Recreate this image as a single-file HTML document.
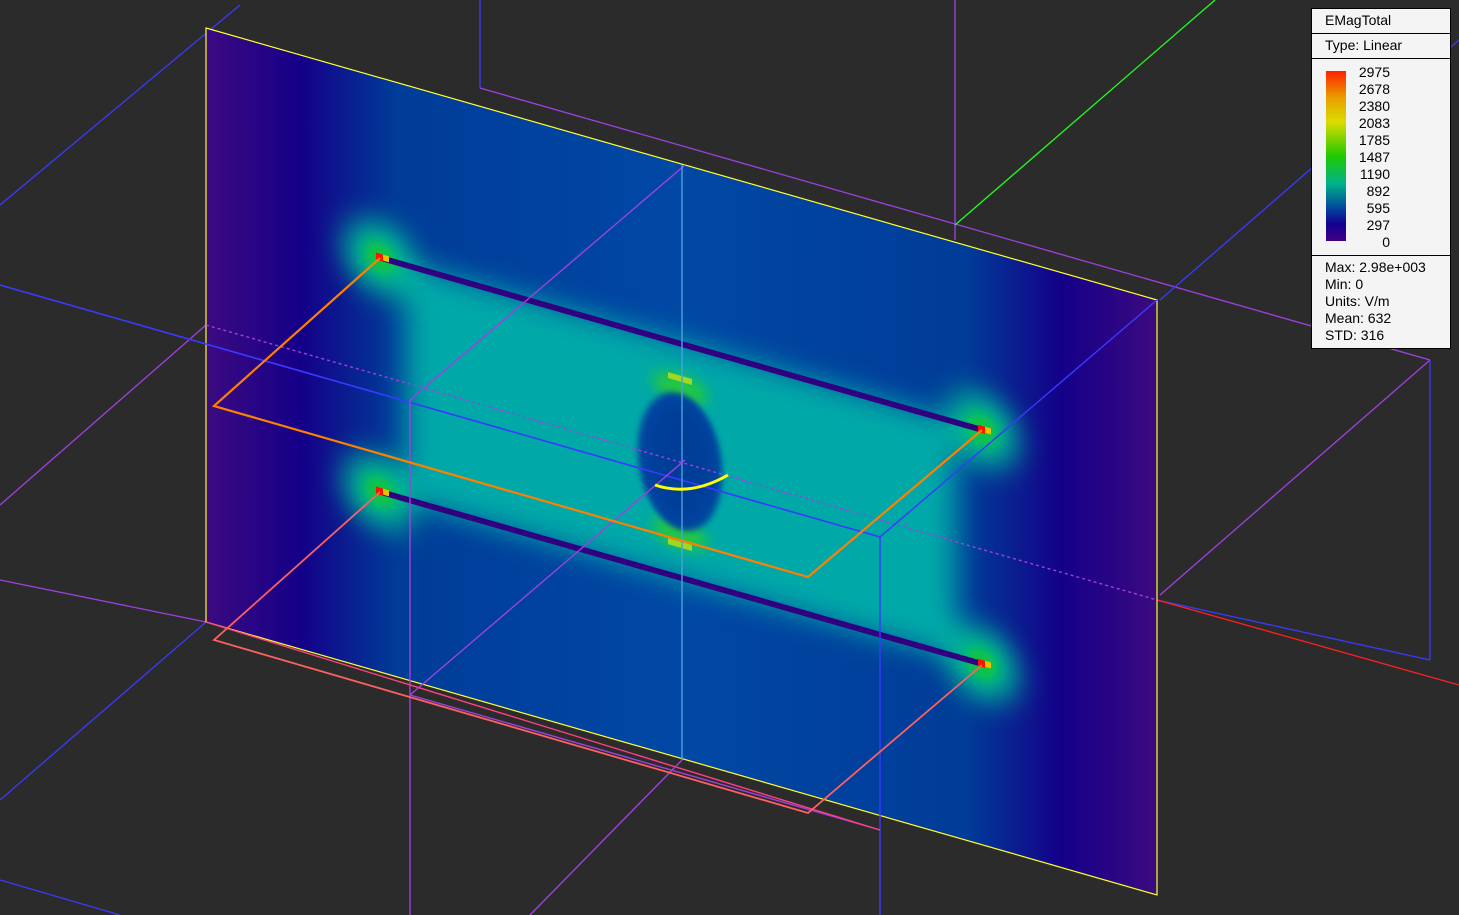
<!DOCTYPE html>
<html><head><meta charset="utf-8"><style>
html,body{margin:0;padding:0;background:#2b2b2b;overflow:hidden}
svg{display:block}
.lg{position:absolute;left:1311px;top:8px;width:138px;height:339px;background:#f4f4f4;border:1px solid #000;font-family:"Liberation Sans",sans-serif;font-size:14px;color:#000}
.lg .h{height:24px;border-bottom:1px solid #000;padding-left:13px;line-height:22px}
.bar{position:absolute;left:14px;top:62px;width:20px;height:170px;background:linear-gradient(#ff2000,#e8a000 16%,#dcdc00 30%,#20c800 50%,#00b488 66%,#004c9c 80%,#140090 90%,#400080)}
.nums{position:absolute;left:38px;top:55px;width:40px;text-align:right;line-height:17px}
.st{position:absolute;left:0;top:246px;width:138px;border-top:1px solid #000;padding:3px 0 0 13px;line-height:17px;box-sizing:border-box}
</style></head><body>
<svg width="1459" height="915" viewBox="0 0 1459 915">
<defs>
<linearGradient id="base" x1="0" y1="0" x2="1" y2="0">
<stop offset="0" stop-color="#3c0a80"/><stop offset="0.1" stop-color="#140088"/><stop offset="0.2" stop-color="#003c98"/><stop offset="0.5" stop-color="#0048a4"/><stop offset="0.8" stop-color="#003c98"/><stop offset="0.9" stop-color="#140088"/><stop offset="1" stop-color="#3c0a80"/>
</linearGradient>
<filter id="b1" x="-50%" y="-50%" width="200%" height="200%"><feGaussianBlur stdDeviation="14"/></filter>
<filter id="b2" x="-50%" y="-50%" width="200%" height="200%"><feGaussianBlur stdDeviation="7"/></filter>
<filter id="b3" x="-50%" y="-50%" width="200%" height="200%"><feGaussianBlur stdDeviation="3"/></filter>
</defs>
<g fill="none" stroke-width="1.3">
<line x1="0" y1="205" x2="240" y2="5" stroke="#3a3aff"/>
<line x1="480" y1="0" x2="480" y2="88" stroke="#3a3aff"/>
<line x1="955" y1="0" x2="955" y2="240" stroke="#a040e0"/>
<line x1="480" y1="88" x2="1430" y2="360" stroke="#a040e0"/>
<line x1="955" y1="225" x2="1215" y2="0" stroke="#20ff20"/>
<line x1="1160" y1="300" x2="1459" y2="40" stroke="#3a3aff"/>
<line x1="1160" y1="595" x2="1430" y2="360" stroke="#a040e0"/>
<line x1="1430" y1="360" x2="1430" y2="660" stroke="#3a3aff"/>
<line x1="0" y1="505" x2="206" y2="325" stroke="#a040e0"/>
<line x1="0" y1="580" x2="206" y2="622" stroke="#a040e0"/>
<line x1="0" y1="800" x2="206" y2="622" stroke="#3a3aff"/>
<line x1="0" y1="880" x2="120" y2="915" stroke="#3a3aff"/>
<line x1="1157" y1="600" x2="1430" y2="660" stroke="#3a3aff"/>
<line x1="1157" y1="600" x2="1459" y2="685" stroke="#ff2020"/>
</g>
<g transform="matrix(1,0.286,0,1,206,28)">
<rect x="0" y="0" width="951" height="594" fill="url(#base)"/>
<g filter="url(#b1)">
<rect x="200" y="178" width="550" height="238" fill="#00a8a8"/>
<circle cx="174" cy="180" r="36" fill="#00b898"/>
<circle cx="776" cy="180" r="36" fill="#00b898"/>
<circle cx="174" cy="414" r="36" fill="#00b898"/>
<circle cx="776" cy="414" r="36" fill="#00b898"/>
</g>
<g filter="url(#b2)">
<ellipse cx="474" cy="225" rx="28" ry="14" fill="#20c840"/>
<ellipse cx="474" cy="370" rx="28" ry="14" fill="#20c840"/>
<circle cx="174" cy="180" r="15" fill="#10c830"/>
<circle cx="776" cy="180" r="15" fill="#10c830"/>
<circle cx="174" cy="414" r="15" fill="#10c830"/>
<circle cx="776" cy="414" r="15" fill="#10c830"/>
</g>
<ellipse cx="474" cy="298" rx="42" ry="68" fill="#0044a0" filter="url(#b3)"/>
<ellipse cx="474" cy="298" rx="30" ry="55" fill="#003c98" filter="url(#b2)"/>
<rect x="462" y="212" width="24" height="6" fill="#a0d820"/>
<rect x="462" y="378" width="24" height="6" fill="#a0d820"/>
<line x1="174" y1="180" x2="776" y2="180" stroke="#300080" stroke-width="6"/>
<line x1="174" y1="414" x2="776" y2="414" stroke="#300080" stroke-width="6"/>
<rect x="170" y="176" width="7" height="7" fill="#ff1000"/>
<rect x="772" y="176" width="7" height="7" fill="#ff1000"/>
<rect x="170" y="410" width="7" height="7" fill="#ff1000"/>
<rect x="772" y="410" width="7" height="7" fill="#ff1000"/>
<rect x="177" y="176" width="6" height="6" fill="#e8c000"/>
<rect x="779" y="176" width="6" height="6" fill="#e8c000"/>
<rect x="177" y="410" width="6" height="6" fill="#e8c000"/>
<rect x="779" y="410" width="6" height="6" fill="#e8c000"/>
</g>
<g fill="none" stroke-width="1.4">
<polygon points="206,28 1157,300 1157,895 206,622" stroke="#ffff30" stroke-width="1.2"/>
<line x1="0" y1="285" x2="880" y2="537" stroke="#3a3aff" stroke-width="1.6"/>
<line x1="206" y1="325" x2="1157" y2="600" stroke="#a040e0" stroke-dasharray="3,3"/>
<line x1="880" y1="537" x2="1157" y2="300" stroke="#3a3aff"/>
<line x1="410" y1="400" x2="410" y2="915" stroke="#a040e0"/>
<line x1="410" y1="400" x2="685" y2="165" stroke="#a040e0"/>
<line x1="880" y1="537" x2="880" y2="915" stroke="#3a3aff"/>
<line x1="682" y1="165" x2="682" y2="760" stroke="#4aa0e0"/>
<line x1="410" y1="695" x2="685" y2="460" stroke="#a040e0"/>
<line x1="410" y1="695" x2="880" y2="830" stroke="#a040e0"/>
<line x1="206" y1="622" x2="880" y2="830" stroke="#ff4080"/>
<line x1="530" y1="915" x2="682" y2="760" stroke="#a040e0"/>
<polyline points="380,258 214,406 808,577 982,430" stroke="#ff8000" stroke-width="2.2"/>
<polyline points="380,492 214,640 808,813 982,665" stroke="#ff6060" stroke-width="1.8"/>
<path d="M655,485 Q690,497 728,475" stroke="#ffff00" stroke-width="3"/>
</g>
</svg>
<div class="lg">
<div class="h">EMagTotal</div>
<div class="h">Type: Linear</div>
<div class="bar"></div>
<div class="nums">2975<br>2678<br>2380<br>2083<br>1785<br>1487<br>1190<br>892<br>595<br>297<br>0</div>
<div class="st">Max: 2.98e+003<br>Min: 0<br>Units: V/m<br>Mean: 632<br>STD: 316</div>
</div>
</body></html>
